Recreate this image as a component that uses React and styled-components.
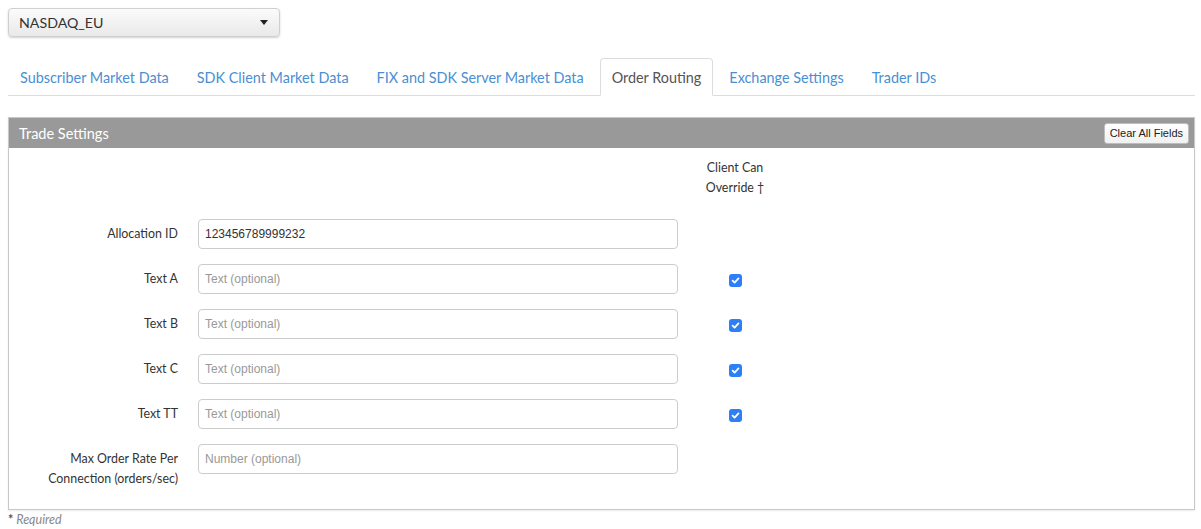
import React from 'react';
import styled, { createGlobalStyle } from 'styled-components';

// Order Routing page: exchange picker, tab strip and the trade settings form

const GlobalStyle = createGlobalStyle`
  body {
    margin: 0;
    background: #fff;
    font-family: Lato, "Open Sans", sans-serif;
    color: #333;
  }
`;

const TABS = [
  'Subscriber Market Data',
  'SDK Client Market Data',
  'FIX and SDK Server Market Data',
  'Order Routing',
  'Exchange Settings',
  'Trader IDs',
];

const FIELDS = [
  { label: 'Allocation ID', value: '123456789999232', override: false },
  { label: 'Text A', placeholder: 'Text (optional)', override: true },
  { label: 'Text B', placeholder: 'Text (optional)', override: true },
  { label: 'Text C', placeholder: 'Text (optional)', override: true },
  { label: 'Text TT', placeholder: 'Text (optional)', override: true },
  {
    label: 'Max Order Rate Per Connection (orders/sec)',
    placeholder: 'Number (optional)',
    override: false,
  },
];

const App = () => (
  <Page>
    <GlobalStyle />
    <Select>
      <span>NASDAQ_EU</span>
      <Caret />
    </Select>

    <TabBar>
      {TABS.map(tab => (
        <Tab key={tab} $active={tab === 'Order Routing'}>
          {tab}
        </Tab>
      ))}
    </TabBar>

    <Panel>
      <PanelHeader>
        <PanelTitle>Trade Settings</PanelTitle>
        <ClearButton>Clear All Fields</ClearButton>
      </PanelHeader>
      <PanelBody>
        <span />
        <span />
        <ColumnHead>
          Client Can
          <br />
          Override †
        </ColumnHead>
        {FIELDS.map(field => (
          <React.Fragment key={field.label}>
            <FieldLabel $wrap={field.label.length > 20}>{field.label}</FieldLabel>
            <TextInput
              defaultValue={field.value}
              placeholder={field.placeholder}
            />
            <CheckCell>{field.override && <Check />}</CheckCell>
          </React.Fragment>
        ))}
      </PanelBody>
    </Panel>

    <Required>
      <b>*</b> Required
    </Required>
  </Page>
);

const Check = () => (
  <CheckBox>
    <svg width="9" height="9" viewBox="0 0 10 10">
      <path
        d="M1.8 5.2 L4 7.4 L8.3 2.6"
        fill="none"
        stroke="#fff"
        strokeWidth="2"
        strokeLinecap="round"
        strokeLinejoin="round"
      />
    </svg>
  </CheckBox>
);

const Page = styled.div`
  padding: 8px 6px 0 8px;
  width: 1187px;
`;

const Select = styled.div`
  width: 272px;
  height: 29px;
  box-sizing: border-box;
  display: flex;
  align-items: center;
  justify-content: space-between;
  padding: 0 11px 0 10px;
  border: 1px solid #cfcfcf;
  border-radius: 4px;
  background: linear-gradient(#fbfbfb, #e9e9e9);
  box-shadow: 0 1px 2px rgba(0, 0, 0, 0.18);
  font-size: 14.2px;
  color: #333;
`;

const Caret = styled.span`
  width: 0;
  height: 0;
  border-left: 4px solid transparent;
  border-right: 4px solid transparent;
  border-top: 5px solid #222;
`;

const TabBar = styled.div`
  display: flex;
  margin-top: 21px;
  border-bottom: 1px solid #ddd;
`;

const Tab = styled.div`
  height: 36px;
  display: flex;
  align-items: center;
  padding: 0 11px;
  margin-right: 4px;
  margin-bottom: -1px;
  border: 1px solid ${p => (p.$active ? '#ddd' : 'transparent')};
  border-bottom-color: ${p => (p.$active ? '#fff' : 'transparent')};
  border-radius: 4px 4px 0 0;
  background: ${p => (p.$active ? '#fff' : 'transparent')};
  color: ${p => (p.$active ? '#555' : '#4a8fd3')};
  font-size: 14.4px;
  white-space: nowrap;
`;

const Panel = styled.div`
  margin-top: 21px;
  border: 1px solid #c8c8c8;
  box-shadow: 0 1px 2px rgba(0, 0, 0, 0.08);
`;

const PanelHeader = styled.div`
  height: 30px;
  display: flex;
  align-items: center;
  justify-content: space-between;
  padding: 0 5px 0 10px;
  background: #999;
`;

const PanelTitle = styled.div`
  color: #fff;
  font-size: 14.5px;
`;

const ClearButton = styled.button`
  height: 21px;
  padding: 0 5px;
  border: 1px solid #bdbdbd;
  border-radius: 3px;
  background: linear-gradient(#fff, #f1f1f1);
  font-family: "Liberation Sans", Arial, sans-serif;
  font-size: 11px;
  color: #222;
`;

const PanelBody = styled.div`
  display: grid;
  grid-template-columns: 169px 480px 74px;
  column-gap: 20px;
  row-gap: 15px;
  padding: 10px 0 20px;
  background: #fff;
`;

const ColumnHead = styled.div`
  font-size: 12.4px;
  line-height: 20px;
  color: #333;
  text-align: center;
  margin-bottom: 6px;
`;

const FieldLabel = styled.div`
  font-size: 12.4px;
  line-height: 20px;
  color: #333;
  text-align: right;
  padding-top: 5px;
  padding-left: ${p => (p.$wrap ? '30px' : '0')};
`;

const TextInput = styled.input`
  height: 30px;
  box-sizing: border-box;
  padding: 0 6px;
  border: 1px solid #ccc;
  border-radius: 4px;
  font-family: "Liberation Sans", Arial, sans-serif;
  font-size: 12px;
  color: #333;
  outline: none;

  &::placeholder {
    color: #999;
  }
`;

const CheckCell = styled.div`
  height: 30px;
  display: flex;
  align-items: center;
  justify-content: center;
  padding-top: 3px;
  box-sizing: border-box;
`;

const CheckBox = styled.div`
  width: 13px;
  height: 13px;
  border-radius: 3px;
  background: #2d7ff5;
  display: flex;
  align-items: center;
  justify-content: center;
`;

const Required = styled.div`
  margin-top: 2px;
  font-size: 12.5px;
  font-style: italic;
  color: #888;

  b {
    color: #555;
    font-style: normal;
  }
`;

export default App;
